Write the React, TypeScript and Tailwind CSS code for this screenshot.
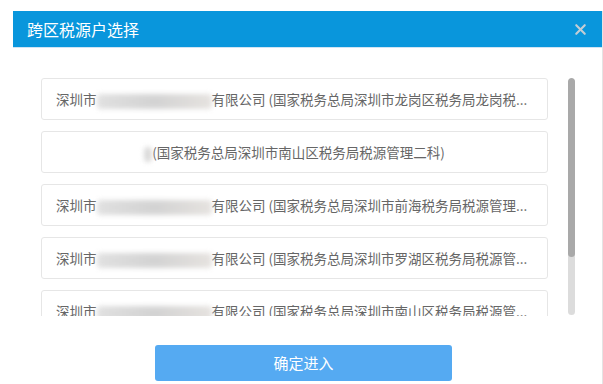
import { X } from "lucide-react";

type Row = { prefix?: string; blur: number; text: string; center?: boolean };

const rows: Row[] = [
  { prefix: "深圳市", blur: 115, text: "有限公司 (国家税务总局深圳市龙岗区税务局龙岗税..." },
  { blur: 8, text: "(国家税务总局深圳市南山区税务局税源管理二科)", center: true },
  { prefix: "深圳市", blur: 115, text: "有限公司 (国家税务总局深圳市前海税务局税源管理..." },
  { prefix: "深圳市", blur: 115, text: "有限公司 (国家税务总局深圳市罗湖区税务局税源管..." },
  { prefix: "深圳市", blur: 115, text: "有限公司 (国家税务总局深圳市南山区税务局税源管..." },
];

function Blurred({ width }: { width: number }) {
  return (
    <span
      className="inline-block h-[15px] align-middle rounded-sm bg-gradient-to-r from-[#d9d9d9] via-[#c8c8c8] to-[#e0dcd8] blur-[2.5px] opacity-80"
      style={{ width }}
    />
  );
}

export default function App() {
  return (
    <div className="w-[603px] h-[384px] bg-white pt-[11px] pl-[13px] overflow-hidden font-['Noto_Sans_CJK_SC','Microsoft_YaHei',sans-serif]">
      <div className="flex flex-col h-full w-[590px] bg-white border-r border-[#e4e4e4]">
        <header className="flex items-center justify-between h-[37px] shrink-0 bg-[#0996dc] border-b border-[#cfe4f4] pl-[14px] pr-[13px]">
          <h1 className="text-[16px] text-white leading-none">跨区税源户选择</h1>
          <X className="w-[17px] h-[17px] text-[#c3cdd4]" strokeWidth={3} />
        </header>
        <section className="flex gap-[20px] pt-[30px] pl-[28px] pr-[27px]">
          <div className="flex flex-col gap-[11px] w-[507px] h-[238px] overflow-hidden">
            {rows.map((r, i) => (
              <div
                key={i}
                className={`flex items-center shrink-0 h-[42px] px-[14px] bg-white border border-[#e6e6e6] rounded-[3px] text-[13.5px] text-[#666] overflow-hidden ${r.center ? "justify-center" : ""}`}
              >
                <span className="whitespace-nowrap">
                  {r.prefix}
                  <Blurred width={r.blur} />
                  {r.text}
                </span>
              </div>
            ))}
          </div>
          <div className="flex flex-col w-[7px] h-[237px] rounded-full bg-[#dcdcdc] overflow-hidden">
            <div className="h-[179px] rounded-full bg-[#a9a9a9]" />
          </div>
        </section>
        <div className="pt-[29px] pl-[142px]">
          <button className="w-[297px] h-[36px] rounded-[3px] bg-[#55aaf2] text-white text-[15px]">
            确定进入
          </button>
        </div>
      </div>
    </div>
  );
}
